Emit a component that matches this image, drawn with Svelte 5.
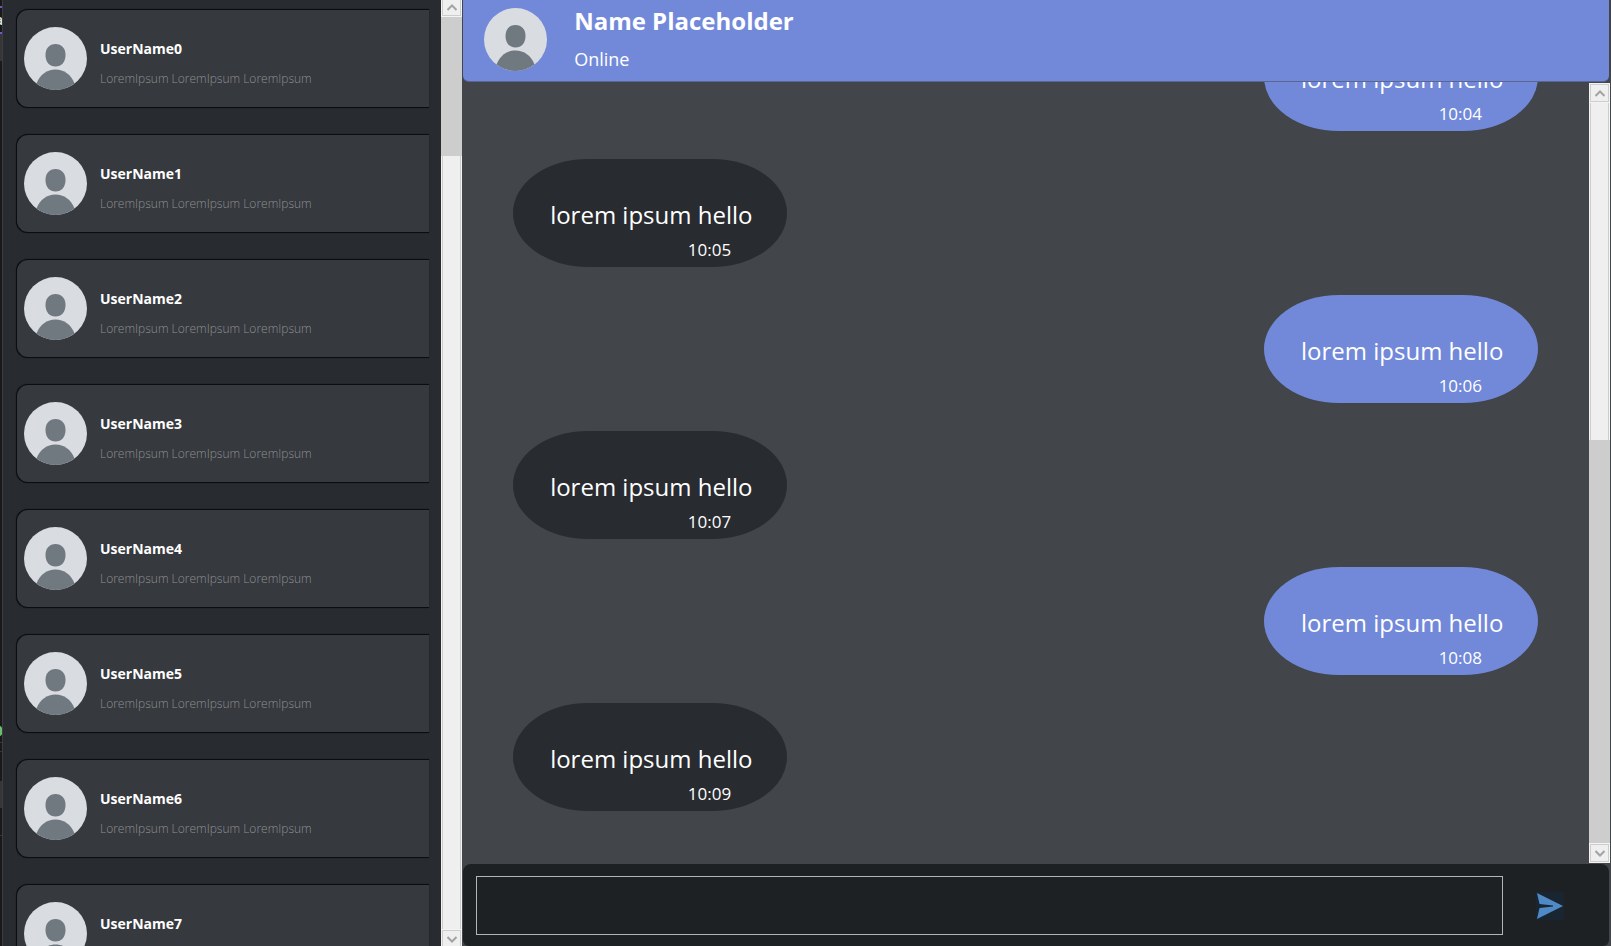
<script>
  const users = Array.from({ length: 8 }, (_, i) => ({
    name: `UserName${i}`,
    preview: 'LoremIpsum LoremIpsum LoremIpsum'
  }));
  const messages = Array.from({ length: 6 }, (_, i) => ({
    text: 'lorem ipsum hello',
    time: `10:0${i + 4}`,
    own: i % 2 === 0
  }));
  let draft = $state('');
</script>

{#snippet avatar()}
  <svg class="avatar" viewBox="0 0 63 63" aria-hidden="true">
    <circle cx="31.500" cy="31.500" r="31.500" fill="#d9dce1" />
    <path d="M31.500 17C37.500 17 41.500 21 41.500 28S37.500 39.500 31.500 39.500S21.500 35 21.500 28S25.500 17 31.500 17z" fill="#707880" />
    <path d="M12.500 56.500C16 47.500 23 42.500 31.500 42.500s15.500 5 19 14A31.500 31.500 0 0 1 12.500 56.500z" fill="#707880" />
  </svg>
{/snippet}

{#snippet arrow(label, up)}
  <button class="arrow" aria-label={label}>
    <svg viewBox="0 0 10 7" width="10" height="7" aria-hidden="true">
      <path d={up ? 'M0.500 6L5 1.500L9.500 6' : 'M0.500 1L5 5.500L9.500 1'} fill="none" stroke="#a3a3a3" stroke-width="2" />
    </svg>
  </button>
{/snippet}

<div class="window">
  <svg class="edge" viewBox="0 0 3 946" preserveAspectRatio="xMinYMin slice" aria-hidden="true">
    <rect width="3" height="946" fill="#19191a" />
    <rect y="34" width="3" height="27" fill="#363637" />
    <rect y="6" width="3" height="2" fill="#6a5acd" />
    <rect y="32" width="3" height="2" fill="#6a5acd" />
    <text x="-5" y="25" font-size="14" font-weight="600" fill="#e6e6e6">a</text>
    <circle cx="-3" cy="731" r="6" fill="#6cbf6c" />
    <rect y="742" width="3" height="1" fill="#363637" />
    <rect y="751" width="3" height="1" fill="#363637" />
    <rect y="781" width="3" height="27" fill="#363637" />
    <rect y="835" width="3" height="1" fill="#363637" />
  </svg>

  <aside class="sidebar">
    <ul class="users">
      {#each users as user}
        <li class="user">
          {@render avatar()}
          <div class="about">
            <h2>{user.name}</h2>
            <p>{user.preview}</p>
          </div>
        </li>
      {/each}
    </ul>
    <div class="scroll tall">
      {@render arrow('Scroll users up', true)}
      <div class="track"><div class="thumb" style="height: 15.2%"></div></div>
      {@render arrow('Scroll users down', false)}
    </div>
  </aside>

  <main class="chat">
    <header>
      {@render avatar()}
      <div class="contact">
        <h1>Name Placeholder</h1>
        <p>Online</p>
      </div>
    </header>
    <section class="thread">
      <div class="messages">
        {#each messages as message}
          <article class="bubble" class:own={message.own}>
            <p>{message.text}</p>
            <time>{message.time}</time>
          </article>
        {/each}
      </div>
      <div class="scroll">
        {@render arrow('Scroll messages up', true)}
        <div class="track end"><div class="thumb" style="height: 54.4%"></div></div>
        {@render arrow('Scroll messages down', false)}
      </div>
    </section>
    <form class="composer" onsubmit={(e) => e.preventDefault()}>
      <input type="text" aria-label="Message" bind:value={draft} />
      <button class="send" aria-label="Send">
        <svg viewBox="0 0 28 28" width="28" height="28" aria-hidden="true">
          <rect width="28" height="28" fill="#192530" />
          <path d="M1 1L27 14L1 27L3.500 16L17 14.500V13.500L3.500 12z" fill="#4f8ac7" />
        </svg>
      </button>
    </form>
  </main>
</div>

<style>
  :global(body) {
    margin: 0;
    background: #282b30;
  }
  * {
    box-sizing: border-box;
  }
  h1, h2, p, ul {
    margin: 0;
    padding: 0;
  }
  button {
    padding: 0;
    border: 0;
    background: none;
  }
  .window {
    display: flex;
    height: 100vh;
    overflow: hidden;
    color: #fff;
    background: #424549;
    font-family: 'Open Sans', 'Noto Sans', sans-serif;
  }
  .edge {
    flex: none;
    width: 3px;
    height: 100%;
    border-right: 1px solid #3c3d40;
  }
  .sidebar {
    display: flex;
    flex: 0 0 28.5%;
    background: #282b30;
  }
  .users {
    display: flex;
    flex: 1;
    flex-direction: column;
    gap: 26px;
    padding: 9px 12px 0 13px;
    overflow: hidden;
    list-style: none;
  }
  .user {
    display: flex;
    flex: none;
    align-items: center;
    gap: 13px;
    height: 99px;
    padding-left: 7px;
    border: 1px solid #0c0d0e;
    border-right: 0;
    border-radius: 12px 0 0 12px;
    background: #36393e;
    box-shadow: 0 0 1px #0c0d0e;
  }
  .avatar {
    flex: none;
    width: 63px;
    height: 63px;
    margin-top: -1px;
  }
  .about {
    padding-top: 10px;
  }
  .about h2 {
    font-size: 14px;
    font-weight: 700;
    line-height: 30px;
  }
  .about p {
    color: #8e9093;
    font-size: 12px;
    font-weight: 300;
    line-height: 30px;
  }
  .scroll {
    display: flex;
    flex: 0 0 21px;
    flex-direction: column;
    margin: 1px 0;
    padding: 0 1px;
    background: #f4f4f4;
  }
  .scroll.tall {
    margin: -3px 0;
  }
  .arrow {
    display: grid;
    flex: 0 0 18px;
    place-items: center;
    margin: 1px 0;
    border: 1px solid #cdcdcd;
    background: #efefef;
  }
  .track {
    display: flex;
    flex: 1;
    flex-direction: column;
    border: solid #cdcdcd;
    border-width: 0 1px;
    background: #efefef;
  }
  .track.end {
    justify-content: flex-end;
  }
  .thumb {
    margin: 0 -2px;
    background: #cdcdcd;
  }
  .chat {
    display: flex;
    flex: 1;
    flex-direction: column;
    min-width: 0;
    padding-right: 1px;
  }
  header {
    display: flex;
    flex: none;
    gap: 27px;
    height: 82px;
    margin: 0 1px;
    padding: 8px 21px;
    border-bottom: 1px solid #5b6690;
    border-radius: 0 0 6px 6px;
    background: #7289da;
  }
  header .avatar {
    margin-top: 0;
  }
  .contact h1 {
    font-size: 24px;
    font-weight: 700;
    line-height: 26px;
  }
  .contact p {
    margin-top: 12px;
    font-size: 18px;
    line-height: 26px;
  }
  .thread {
    display: flex;
    flex: 1;
    min-height: 0;
  }
  .messages {
    display: flex;
    flex: 1;
    flex-direction: column;
    align-items: flex-start;
    justify-content: flex-end;
    gap: 28px;
    padding: 0 51px 53px;
    overflow: hidden;
  }
  .bubble {
    flex: none;
    width: 274px;
    height: 108px;
    padding-top: 36px;
    border-radius: 75px / 54px;
    background: #282b30;
  }
  .bubble.own {
    align-self: flex-end;
    background: #7289da;
  }
  .bubble p {
    padding-left: 37px;
    font-size: 24px;
    line-height: 40px;
  }
  .bubble time {
    display: block;
    padding-right: 56px;
    font-size: 17px;
    line-height: 30px;
    text-align: right;
  }
  .composer {
    display: flex;
    flex: none;
    height: 82px;
    margin: 0 1px;
    padding: 12px 45px 11px 13px;
    border-radius: 8px 8px 6px 6px;
    background: #1e2124;
  }
  .composer input {
    flex: 1;
    min-width: 0;
    padding: 0 12px;
    border: 1px solid #b4b5b6;
    border-radius: 0;
    outline: 0;
    color: #fff;
    background: transparent;
    font: inherit;
    font-size: 18px;
  }
  .send {
    display: grid;
    flex: none;
    place-items: center;
    margin-left: 33px;
  }
</style>
